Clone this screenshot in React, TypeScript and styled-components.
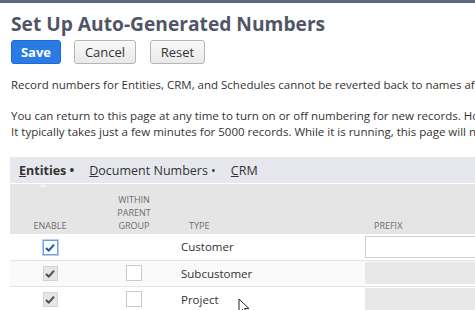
import { createGlobalStyle, styled } from 'styled-components'

const GlobalStyle = createGlobalStyle`
  html, body {
    margin: 0;
    padding: 0;
    background: #fff;
    font-family: "Open Sans", "Liberation Sans", sans-serif;
    color: #333;
  }
`

type Row = {
  type: string
  focused?: boolean
  parent: boolean
  prefix: boolean
}

const rows: Row[] = [
  { type: 'Customer', focused: true, parent: false, prefix: true },
  { type: 'Subcustomer', parent: true, prefix: false },
  { type: 'Project', parent: true, prefix: false },
]

function Check({ variant }: { variant: 'focus' | 'disabled' }) {
  return (
    <CheckBox variant={variant}>
      <svg width="10" height="9" viewBox="0 0 10 9">
        <path
          d="M1 5 L3.8 7.6 L9 1.6"
          fill="none"
          stroke={variant === 'focus' ? '#1f5fae' : '#555'}
          strokeWidth="2.2"
          strokeLinejoin="round"
        />
      </svg>
    </CheckBox>
  )
}

function App() {
  return (
    <Page>
      <GlobalStyle />
      <TopBar />
      <Content>
        <Title>Set Up Auto-Generated Numbers</Title>
        <Buttons>
          <Button primary width={50}>
            Save
          </Button>
          <Button width={62}>Cancel</Button>
          <Button width={55}>Reset</Button>
        </Buttons>
        <Notes>
          <Para>
            Record numbers for Entities, CRM, and Schedules cannot be reverted back to names after
            they have been assigned.
          </Para>
          <Para>
            You can return to this page at any time to turn on or off numbering for new records.
            However, existing records will be renumbered.
            <br />
            It typically takes just a few minutes for 5000 records. While it is running, this page
            will not be available.
          </Para>
        </Notes>
      </Content>
      <Panel>
        <Tabs>
          <Tab active>
            <u>E</u>ntities •
          </Tab>
          <Tab>
            <u>D</u>ocument Numbers •
          </Tab>
          <Tab>
            <u>C</u>RM
          </Tab>
        </Tabs>
        <Table>
          <colgroup>
            <col style={{ width: 80 }} />
            <col style={{ width: 88 }} />
            <col style={{ width: 184 }} />
            <col style={{ width: 260 }} />
          </colgroup>
          <thead>
            <tr>
              <HeadCell center>ENABLE</HeadCell>
              <HeadCell center>
                WITHIN
                <br />
                PARENT
                <br />
                GROUP
              </HeadCell>
              <HeadCell pad={11}>TYPE</HeadCell>
              <HeadCell pad={12}>PREFIX</HeadCell>
            </tr>
          </thead>
          <tbody>
            {rows.map((r, i) => (
              <BodyRow key={r.type} shaded={i % 2 === 1}>
                <Cell center>
                  <Check variant={r.focused ? 'focus' : 'disabled'} />
                </Cell>
                <Cell center>{r.parent && <EmptyBox />}</Cell>
                <Cell>{r.type}</Cell>
                <Cell>
                  <PrefixInput disabled={!r.prefix} />
                </Cell>
              </BodyRow>
            ))}
          </tbody>
        </Table>
      </Panel>
      <Cursor width="12" height="18" viewBox="0 0 12 18">
        <path
          d="M1 1 L1 15 L4.5 11.5 L7 17 L9 16 L6.6 10.6 L11 10.6 Z"
          fill="#fff"
          stroke="#222"
          strokeWidth="1"
        />
      </Cursor>
    </Page>
  )
}

export default App

const Page = styled.div`
  position: relative;
  width: 475px;
  height: 310px;
  overflow: hidden;
`

const TopBar = styled.div`
  height: 3px;
  background: #5d6a86;
`

const Content = styled.div`
  padding-left: 11px;
`

const Title = styled.h1`
  margin: 7px 0 0;
  font-size: 19.2px;
  line-height: 28px;
  font-weight: 700;
  color: #4f5666;
  white-space: nowrap;
`

const Buttons = styled.div`
  display: flex;
  gap: 13px;
  margin-top: 2px;
  & > :last-child {
    margin-left: 1px;
  }
`

const Button = styled.button<{ primary?: boolean; width: number }>`
  width: ${(p) => p.width}px;
  height: 24px;
  padding: 0;
  font-family: inherit;
  font-size: 13px;
  font-weight: ${(p) => (p.primary ? 700 : 400)};
  color: ${(p) => (p.primary ? '#fff' : '#333')};
  background: ${(p) => (p.primary ? '#2a7be4' : 'linear-gradient(#f9f9f9, #e9e9e9)')};
  border: 1px solid ${(p) => (p.primary ? '#1f6ad2' : '#b5b5b5')};
  border-radius: 3px;
`

const Notes = styled.div`
  margin-top: 13px;
  font-size: 11.5px;
  line-height: 16px;
  white-space: nowrap;
`

const Para = styled.p`
  margin: 0 0 15px;
`

const Panel = styled.div`
  margin: 17px 0 0 10px;
`

const Tabs = styled.div`
  display: flex;
  gap: 15px;
  height: 26px;
  align-items: center;
  padding-left: 9px;
  background: #e6e8ee;
  font-size: 12.5px;
  border-bottom: 1px solid #fff;
`

const Tab = styled.div<{ active?: boolean }>`
  position: relative;
  white-space: nowrap;
  font-weight: ${(p) => (p.active ? 700 : 400)};
  color: #333;
  &::after {
    content: '';
    display: ${(p) => (p.active ? 'block' : 'none')};
    position: absolute;
    left: 20px;
    bottom: -8px;
    border: 4px solid transparent;
    border-bottom-color: #f2f2f2;
  }
`

const Table = styled.table`
  table-layout: fixed;
  width: 612px;
  border-collapse: collapse;
  font-size: 11.5px;
`

const HeadCell = styled.th<{ center?: boolean; pad?: number }>`
  height: 48px;
  padding: 0 0 2px ${(p) => p.pad ?? 0}px;
  vertical-align: bottom;
  text-align: ${(p) => (p.center ? 'center' : 'left')};
  background: #e5e5e5;
  font-size: 9px;
  line-height: 13px;
  font-weight: 400;
  color: #6d6d6d;
`

const BodyRow = styled.tr<{ shaded?: boolean }>`
  height: 26px;
  background: ${(p) => (p.shaded ? '#fafafa' : '#fff')};
  border-bottom: 1px solid #e3e3e3;
`

const Cell = styled.td<{ center?: boolean }>`
  padding: 0 0 0 ${(p) => (p.center ? 0 : 3)}px;
  text-align: ${(p) => (p.center ? 'center' : 'left')};
  vertical-align: middle;
  color: #333;
  white-space: nowrap;
`

const CheckBox = styled.span<{ variant: 'focus' | 'disabled' }>`
  display: inline-flex;
  align-items: center;
  justify-content: center;
  vertical-align: middle;
  width: 13px;
  height: 13px;
  border: 1px solid ${(p) => (p.variant === 'focus' ? '#6f9be0' : '#d2d2d2')};
  background: ${(p) => (p.variant === 'focus' ? '#fff' : '#e6e6e6')};
  box-shadow: ${(p) => (p.variant === 'focus' ? '0 0 0 1px #b7cff3' : 'none')};
`

const EmptyBox = styled.span`
  display: inline-block;
  vertical-align: middle;
  width: 14px;
  height: 14px;
  border: 1px solid #c9c9c9;
  background: #fff;
`

const PrefixInput = styled.input`
  display: block;
  box-sizing: border-box;
  width: 100%;
  height: 22px;
  border: 1px solid ${(p) => (p.disabled ? '#e8e8e8' : '#cfcfcf')};
  background: ${(p) => (p.disabled ? '#e8e8e8' : '#fff')};
`

const Cursor = styled.svg`
  position: absolute;
  left: 238px;
  top: 298px;
`
